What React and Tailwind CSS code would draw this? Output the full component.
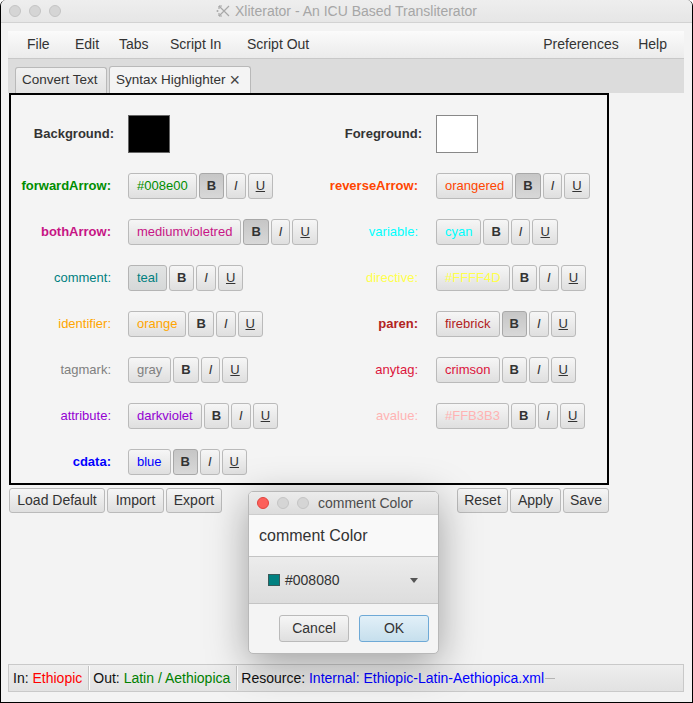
import clsx from "clsx";

const LEFT_ROWS = [
  { label: "forwardArrow:", value: "#008e00", color: "text-[#008e00]", bold: true },
  { label: "bothArrow:", value: "mediumvioletred", color: "text-[#c71585]", bold: true },
  { label: "comment:", value: "teal", color: "text-[#008080]", focused: true },
  { label: "identifier:", value: "orange", color: "text-[#ffa500]" },
  { label: "tagmark:", value: "gray", color: "text-[#808080]" },
  { label: "attribute:", value: "darkviolet", color: "text-[#9400d3]" },
  { label: "cdata:", value: "blue", color: "text-[#0000ff]", bold: true },
];

const RIGHT_ROWS = [
  { label: "reverseArrow:", value: "orangered", color: "text-[#ff4500]", bold: true },
  { label: "variable:", value: "cyan", color: "text-[#00ffff]" },
  { label: "directive:", value: "#FFFF4D", color: "text-[#ffff4d]" },
  { label: "paren:", value: "firebrick", color: "text-[#b22222]", bold: true },
  { label: "anytag:", value: "crimson", color: "text-[#dc143c]" },
  { label: "avalue:", value: "#FFB3B3", color: "text-[#ffb3b3]" },
  null,
];

function Btn({ children, pressed, focused, className }) {
  return (
    <div
      className={clsx(
        "flex items-center justify-center rounded-[3px] border whitespace-nowrap",
        pressed
          ? "border-[#a8a8a8] bg-linear-to-b from-[#c6c6c6] to-[#d8d8d8]"
          : focused
          ? "border-[#b4b4b4] bg-linear-to-b from-[#e2e4e4] to-[#d6d8d8]"
          : "border-[#bababa] bg-linear-to-b from-[#f6f6f6] to-[#dfdfdf]",
        className
      )}
    >
      {children}
    </div>
  );
}

function StyleControls({ row }) {
  return (
    <div className="flex gap-[2px] text-[13px]">
      <Btn className={clsx("h-[26px] px-2", row.color)} focused={row.focused}>
        {row.value}
      </Btn>
      <Btn className="h-[26px] px-[7px] font-bold text-[#333]" pressed={row.bold}>
        B
      </Btn>
      <Btn className="h-[26px] px-[7px] italic text-[#333]">I</Btn>
      <Btn className="h-[26px] px-[7px] underline text-[#333]">U</Btn>
    </div>
  );
}

function Label({ row, className }) {
  return (
    <div
      className={clsx(
        "text-right text-[13px]",
        row.bold && "font-bold",
        row.color,
        className
      )}
    >
      {row.label}
    </div>
  );
}

function TitleIcon() {
  return (
    <svg width="15" height="14" viewBox="0 0 15 14" fill="none" stroke="#a8a8a8" strokeWidth="1.2">
      <path d="M3 2 L13 12 M3 12 L13 2" />
      <path d="M3 2 L3 5 M3 2 L6 2 M3 12 L3 9 M3 12 L6 12" />
      <circle cx="1.5" cy="7" r="1" fill="#a8a8a8" stroke="none" />
    </svg>
  );
}

function Light({ color }) {
  return (
    <div
      className={clsx(
        "w-[12px] h-[12px] rounded-full border",
        color === "red"
          ? "bg-[#fc605b] border-[#e0443e]"
          : "bg-[#d5d5d5] border-[#c4c4c4]"
      )}
    />
  );
}

function Separator() {
  return <div className="ml-[6px] mr-[3px] w-[2px] h-[24px] border-l border-[#c4c4c4] border-r border-r-white" />;
}

function ColorDialog() {
  return (
    <div className="absolute left-[247px] top-[491px] w-[191px] h-[163px] flex flex-col rounded-[5px] border border-[#b8b8b8] bg-[#f4f4f4] shadow-[0_10px_40px_rgba(0,0,0,0.35)] overflow-hidden">
      <div className="h-[23px] flex items-center pl-[8px] gap-[8px] bg-linear-to-b from-[#ececec] to-[#dcdcdc] border-b border-[#cdcdcd]">
        <Light color="red" />
        <Light />
        <Light />
        <span className="ml-[1px] text-[14px] text-[#4c4c4c]">comment Color</span>
      </div>
      <div className="h-[41px] flex items-center pl-[10px] bg-[#f9f9f9] text-[16px] text-[#333]">
        comment Color
      </div>
      <div className="h-[48px] flex items-center pl-[19px] pr-[20px] border-y border-[#c4c4c4] bg-linear-to-b from-[#ececec] to-[#dddddd]">
        <div className="w-[12px] h-[12px] bg-[#008080] border border-[#3a5a5a]" />
        <span className="ml-[5px] text-[14px] text-[#333]">#008080</span>
        <div className="ml-auto w-0 h-0 border-l-[4px] border-r-[4px] border-t-[5px] border-l-transparent border-r-transparent border-t-[#555]" />
      </div>
      <div className="flex-1 flex items-start justify-end gap-[10px] pt-[11px] pr-[9px]">
        <Btn className="w-[70px] h-[27px] text-[14px] text-[#333]">Cancel</Btn>
        <div className="w-[70px] h-[27px] flex items-center justify-center rounded-[3px] border border-[#6ea9d6] bg-linear-to-b from-[#e2f0f8] to-[#c6dfed] text-[14px] text-[#333]">
          OK
        </div>
      </div>
    </div>
  );
}

export default function App() {
  return (
    <div className="relative w-[693px] h-[703px] flex flex-col overflow-hidden rounded-t-[6px] border-x border-b border-black bg-[#f3f3f3] font-['Liberation_Sans',Arial,sans-serif] text-[#333]">
      {/* title bar */}
      <div className="relative h-[23px] flex items-center pl-[8px] gap-[8px] bg-linear-to-b from-[#eeeeee] to-[#e6e6e6] border-b border-[#d2d2d2]">
        <Light />
        <Light />
        <Light />
        <div className="absolute left-[215px] top-0 h-[22px] flex items-center gap-[4px] text-[14px] text-[#a6a6a6]">
          <TitleIcon />
          <span>Xliterator - An ICU Based Transliterator</span>
        </div>
      </div>

      {/* menu bar */}
      <div className="mt-[8px] ml-[7px] mr-[8px] h-[28px] flex items-center pl-[19px] pr-[17px] text-[14px] text-[#333] bg-linear-to-b from-[#fbfbfb] to-[#ebebeb] border-b border-[#c8c8c8]">
        <span className="w-[48px]">File</span>
        <span className="w-[44px]">Edit</span>
        <span className="w-[51px]">Tabs</span>
        <span className="w-[77px]">Script In</span>
        <span>Script Out</span>
        <span className="ml-auto w-[95px]">Preferences</span>
        <span>Help</span>
      </div>

      {/* tabs */}
      <div className="ml-[7px] mr-[8px] h-[34px] flex items-end pl-[7px] gap-[2px] bg-[#dcdcdc] text-[13.5px] whitespace-nowrap">
        <div className="h-[26px] w-[92px] flex items-center pl-[6px] rounded-t-[3px] border border-b-0 border-[#b9b9b9] bg-linear-to-b from-[#f1f1f1] to-[#e3e3e3]">
          Convert Text
        </div>
        <div className="h-[27px] w-[142px] flex items-center pl-[6px] rounded-t-[3px] border border-b-0 border-[#b9b9b9] bg-[#f4f4f4]">
          Syntax Highlighter
          <span className="ml-[4px] text-[18px] leading-none text-[#444]">×</span>
        </div>
      </div>

      {/* editor panel */}
      <div className="ml-[8px] w-[600px] h-[392px] border-2 border-black bg-[#f4f4f4] pt-[20px] flex flex-col gap-[20px]">
        <div className="flex items-center h-[38px]">
          <div className="w-[103px] text-right text-[13px] font-bold text-[#333]">Background:</div>
          <div className="ml-[14px] w-[42px] h-[38px] bg-black border border-[#666]" />
          <div className="ml-[140px] w-[112px] text-right text-[13px] font-bold text-[#333]">
            Foreground:
          </div>
          <div className="ml-[14px] w-[42px] h-[38px] bg-white border border-[#888]" />
        </div>
        {LEFT_ROWS.map((row, i) => (
          <div key={row.label} className="flex items-center h-[26px]">
            <Label row={row} className="w-[100px]" />
            <div className="ml-[17px] w-[180px]">
              <StyleControls row={row} />
            </div>
            {RIGHT_ROWS[i] && (
              <>
                <Label row={RIGHT_ROWS[i]} className="w-[110px]" />
                <div className="ml-[18px]">
                  <StyleControls row={RIGHT_ROWS[i]} />
                </div>
              </>
            )}
          </div>
        ))}
      </div>

      {/* bottom buttons */}
      <div className="mt-[3px] ml-[8px] w-[600px] flex justify-between text-[14px]">
        <div className="flex gap-[2px]">
          <Btn className="h-[25px] w-[96px]">Load Default</Btn>
          <Btn className="h-[25px] w-[57px]">Import</Btn>
          <Btn className="h-[25px] w-[56px]">Export</Btn>
        </div>
        <div className="flex gap-[2px]">
          <Btn className="h-[25px] w-[51px]">Reset</Btn>
          <Btn className="h-[25px] w-[51px]">Apply</Btn>
          <Btn className="h-[25px] w-[46px]">Save</Btn>
        </div>
      </div>

      <div className="flex-1" />

      {/* status bar */}
      <div className="mb-[10px] ml-[7px] mr-[8px] h-[28px] flex items-center pl-[4px] text-[14px] border border-[#c9c9c9] bg-linear-to-b from-[#eeeeee] to-[#e2e2e2]">
        <span className="text-[#111]">
          In: <span className="text-[#ff0000]">Ethiopic</span>
        </span>
        <Separator />
        <span className="text-[#111]">
          Out: <span className="text-[#008000]">Latin / Aethiopica</span>
        </span>
        <Separator />
        <span className="text-[#111]">
          Resource: <span className="text-[#0000ff]">Internal: Ethiopic-Latin-Aethiopica.xml</span>
        </span>
        <div className="ml-[1px] w-[10px] h-px bg-[#b4b4b4]" />
      </div>

      <ColorDialog />
    </div>
  );
}
